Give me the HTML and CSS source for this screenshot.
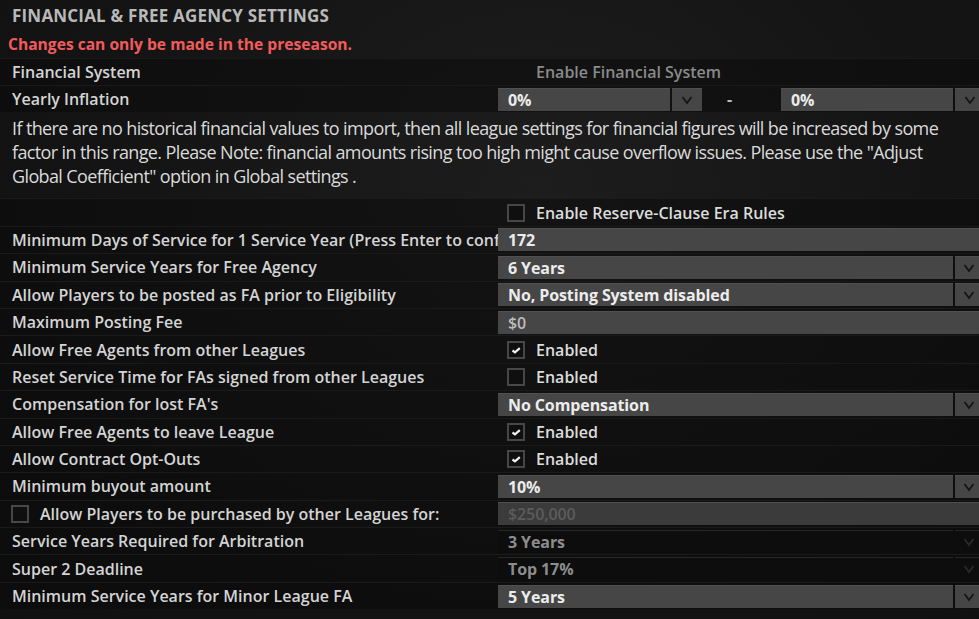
FILE: index.html
```html
<!DOCTYPE html>
<html lang="en">
<head>
    <meta charset="UTF-8">
    <meta name="viewport" content="width=device-width, initial-scale=1.0">
    <title>Financial &amp; Free Agency Settings</title>
    <link rel="stylesheet" href="styles.css">
</head>
<body>
    <div class="screen">
        <!-- 标题 -->
        <h1 class="title">FINANCIAL &amp; FREE AGENCY SETTINGS</h1>
        <p class="warning">Changes can only be made in the preseason.</p>

        <div class="rows">
            <div class="row">
                <div class="label">Financial System</div>
                <div class="ctrl"><span class="check-text off">Enable Financial System</span></div>
            </div>
            <div class="row">
                <div class="label">Yearly Inflation</div>
                <div class="ctrl range">
                    <div class="select small"><span class="value">0%</span><span class="arrow"><svg viewBox="0 0 12 10"><path d="M1.5 2 L6 8 L10.5 2" /></svg></span></div>
                    <span class="dash">-</span>
                    <div class="select small"><span class="value">0%</span><span class="arrow"><svg viewBox="0 0 12 10"><path d="M1.5 2 L6 8 L10.5 2" /></svg></span></div>
                </div>
            </div>
        </div>

        <p class="note">If there are no historical financial values to import, then all league settings for financial figures will be increased by some factor in this range. Please Note: financial amounts rising too high might cause overflow issues. Please use the "Adjust Global Coefficient" option in Global settings .</p>

        <div class="rows">
            <div class="row">
                <div class="label"></div>
                <div class="ctrl"><span class="box"></span><span class="check-text">Enable Reserve-Clause Era Rules</span></div>
            </div>
            <div class="row">
                <div class="label">Minimum Days of Service for 1 Service Year (Press Enter to confirm)</div>
                <div class="ctrl"><div class="input">172</div></div>
            </div>
            <div class="row">
                <div class="label">Minimum Service Years for Free Agency</div>
                <div class="ctrl"><div class="select"><span class="value">6 Years</span><span class="arrow"><svg viewBox="0 0 12 10"><path d="M1.5 2 L6 8 L10.5 2" /></svg></span></div></div>
            </div>
            <div class="row">
                <div class="label">Allow Players to be posted as FA prior to Eligibility</div>
                <div class="ctrl"><div class="select"><span class="value">No, Posting System disabled</span><span class="arrow"><svg viewBox="0 0 12 10"><path d="M1.5 2 L6 8 L10.5 2" /></svg></span></div></div>
            </div>
            <div class="row">
                <div class="label">Maximum Posting Fee</div>
                <div class="ctrl"><div class="input light">$0</div></div>
            </div>
            <div class="row">
                <div class="label">Allow Free Agents from other Leagues</div>
                <div class="ctrl"><span class="box checked"><svg viewBox="0 0 12 12"><path d="M2.5 6.5 L5 8.3 L9.8 4.2" /></svg></span><span class="check-text">Enabled</span></div>
            </div>
            <div class="row">
                <div class="label">Reset Service Time for FAs signed from other Leagues</div>
                <div class="ctrl"><span class="box"></span><span class="check-text">Enabled</span></div>
            </div>
            <div class="row">
                <div class="label">Compensation for lost FA's</div>
                <div class="ctrl"><div class="select"><span class="value">No Compensation</span><span class="arrow"><svg viewBox="0 0 12 10"><path d="M1.5 2 L6 8 L10.5 2" /></svg></span></div></div>
            </div>
            <div class="row">
                <div class="label">Allow Free Agents to leave League</div>
                <div class="ctrl"><span class="box checked"><svg viewBox="0 0 12 12"><path d="M2.5 6.5 L5 8.3 L9.8 4.2" /></svg></span><span class="check-text">Enabled</span></div>
            </div>
            <div class="row">
                <div class="label">Allow Contract Opt-Outs</div>
                <div class="ctrl"><span class="box checked"><svg viewBox="0 0 12 12"><path d="M2.5 6.5 L5 8.3 L9.8 4.2" /></svg></span><span class="check-text">Enabled</span></div>
            </div>
            <div class="row">
                <div class="label">Minimum buyout amount</div>
                <div class="ctrl"><div class="select"><span class="value">10%</span><span class="arrow"><svg viewBox="0 0 12 10"><path d="M1.5 2 L6 8 L10.5 2" /></svg></span></div></div>
            </div>
            <div class="row">
                <div class="label with-box"><span class="box"></span>Allow Players to be purchased by other Leagues for:</div>
                <div class="ctrl"><div class="input faded">$250,000</div></div>
            </div>
            <div class="row">
                <div class="label">Service Years Required for Arbitration</div>
                <div class="ctrl"><div class="select disabled"><span class="value">3 Years</span><span class="arrow"><svg viewBox="0 0 12 10"><path d="M1.5 2 L6 8 L10.5 2" /></svg></span></div></div>
            </div>
            <div class="row">
                <div class="label">Super 2 Deadline</div>
                <div class="ctrl"><div class="select disabled"><span class="value">Top 17%</span><span class="arrow"><svg viewBox="0 0 12 10"><path d="M1.5 2 L6 8 L10.5 2" /></svg></span></div></div>
            </div>
            <div class="row">
                <div class="label">Minimum Service Years for Minor League FA</div>
                <div class="ctrl"><div class="select"><span class="value">5 Years</span><span class="arrow"><svg viewBox="0 0 12 10"><path d="M1.5 2 L6 8 L10.5 2" /></svg></span></div></div>
            </div>
        </div>
    </div>
</body>
</html>
```

FILE: styles.css
```css
*{
    margin: 0;
    padding: 0;
    box-sizing: border-box;
}
html,body{
    height: 100%;
}
body{
    background: #151515;
    background-image: radial-gradient(ellipse at 55% 30%, #1d1d1d 0%, #141414 55%, #101010 100%);
    font-family: "Open Sans", "Noto Sans", sans-serif;
    color: #d2d2d2;
    overflow: hidden;
}
.screen{
    width: 983px;
    padding-top: 4px;
}
.title{
    font-size: 17px;
    font-weight: 700;
    line-height: 24px;
    color: #b9b9b9;
    padding-left: 12px;
    letter-spacing: 0.2px;
}
.warning{
    font-size: 15.6px;
    font-weight: 700;
    line-height: 24px;
    color: #f25b5b;
    padding-left: 8px;
    margin-top: 4px;
    margin-bottom: 1.6px;
}
.rows{
    display: flex;
    flex-direction: column;
}
.row{
    display: grid;
    grid-template-columns: 498px 1fr;
    height: 27.4px;
    align-items: center;
    border-top: 1px solid #1a1a1a;
    background: rgba(8,8,8,0.45);
}
.label{
    padding-left: 12px;
    font-size: 16px;
    font-weight: 600;
    color: #d4d4d4;
    white-space: nowrap;
    overflow: hidden;
}
.label.with-box{
    display: flex;
    align-items: center;
    padding-left: 11px;
}
.label.with-box .box{
    margin-left: 0;
    margin-right: 11px;
}
.ctrl{
    display: flex;
    align-items: center;
    height: 100%;
}
.check-text{
    font-size: 16px;
    font-weight: 600;
    color: #dcdcdc;
}
.check-text.off{
    color: #8a8a8a;
    margin-left: 38px;
}
/* 复选框 */
.box{
    width: 18px;
    height: 18px;
    border: 2px solid #474747;
    background: #0f0f0f;
    margin-left: 9px;
    margin-right: 11px;
    display: flex;
    align-items: center;
    justify-content: center;
}
.box svg{
    width: 12px;
    height: 12px;
    fill: none;
    stroke: #f2f2f2;
    stroke-width: 2.2;
}
/* 下拉框 */
.select{
    flex: 1;
    display: grid;
    grid-template-columns: 1fr 28px;
    column-gap: 2px;
    height: 23px;
}
.select .value,
.input{
    background: #464646;
    border-top: 1px solid #515151;
    font-size: 16px;
    font-weight: 700;
    color: #ececec;
    line-height: 22px;
    padding-left: 10px;
    white-space: nowrap;
    letter-spacing: -0.1px;
}
.select .arrow{
    background: #464646;
    border-top: 1px solid #515151;
    display: flex;
    align-items: center;
    justify-content: center;
}
.arrow svg{
    width: 12px;
    height: 10px;
    fill: none;
    stroke: #151515;
    stroke-width: 1.8;
}
.select.disabled .value,
.select.disabled .arrow{
    background: #0d0d0d;
    border-top: 1px solid #262626;
    color: #8c8c8c;
}
.select.disabled .arrow svg{
    stroke: #2a2a2a;
}
.input{
    flex: 1;
    height: 23px;
}
.input.light{
    font-weight: 600;
    color: #bdbdbd;
}
.input.faded{
    background: #3b3b3b;
    color: #5c5c5c;
    font-weight: 600;
}
.range{
    display: flex;
}
.select.small{
    flex: none;
    width: 204px;
    grid-template-columns: 172px 30px;
}
.dash{
    width: 79px;
    padding-left: 25px;
    font-size: 16px;
    font-weight: 700;
    color: #bdbdbd;
}
/* 说明文字 */
.note{
    font-size: 18px;
    line-height: 24px;
    color: #dadada;
    padding: 4px 12px 10px 12px;
    letter-spacing: -0.62px;
    width: 979px;
}
```
